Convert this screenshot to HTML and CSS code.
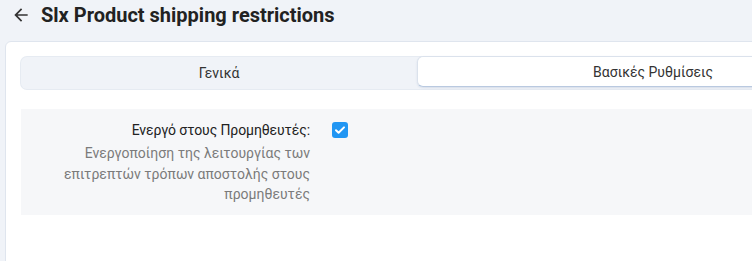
FILE: index.html
```html
<!DOCTYPE html>
<html lang="el">
<head>
<meta charset="utf-8">
<link rel="stylesheet" href="styles.css">
</head>
<body>
<header class="page-header">
  <svg class="back-icon" viewBox="0 0 24 24" width="20" height="20"><path d="M20 11H7.83l5.59-5.59L12 4l-8 8 8 8 1.41-1.41L7.83 13H20v-2z" fill="#333"/></svg>
  <h1 class="page-title">Slx Product shipping restrictions</h1>
</header>
<main class="card">
  <div class="tabs">
    <div class="tab">Γενικά</div>
    <div class="tab tab-active">Βασικές Ρυθμίσεις</div>
  </div>
  <div class="form-row">
    <div class="label-col">
      <div class="field-label">Ενεργό στους Προμηθευτές:</div>
      <div class="field-desc">Ενεργοποίηση της λειτουργίας των επιτρεπτών τρόπων αποστολής στους προμηθευτές</div>
    </div>
    <div class="control-col">
      <span class="checkbox"><svg viewBox="0 0 16 16" width="16" height="16"><path d="M4 8.3l2.6 2.5L12 5.4" fill="none" stroke="#fff" stroke-width="2" stroke-linecap="round" stroke-linejoin="round"/></svg></span>
    </div>
  </div>
</main>
</body>
</html>
```
FILE: styles.css
```css
html, body {
  margin: 0;
  padding: 0;
}
body {
  width: 752px;
  height: 261px;
  overflow: hidden;
  background: #f0f3f8;
  font-family: Roboto, "Noto Sans", sans-serif;
  color: #222;
}
.page-header {
  display: flex;
  align-items: center;
  height: 30px;
  padding: 0 0 0 11px;
  gap: 10px;
  margin-bottom: 11px;
}
.back-icon {
  display: block;
  flex: none;
}
.page-title {
  margin: 0;
  font-size: 20px;
  font-weight: 700;
  color: #222;
  line-height: 24px;
}
.card {
  margin-left: 5px;
  width: 900px;
  height: 300px;
  background: #fff;
  border: 1px solid #dfe5ee;
  border-radius: 6px 0 0 0;
  padding: 15px 0 0 15px;
  box-sizing: border-box;
}
.tabs {
  display: flex;
  width: 868px;
  height: 32px;
  background: #f0f3f8;
  border-radius: 6px;
  box-shadow: 0 0 0 1px #e6ebf2;
}
.tab {
  width: 396px;
  display: flex;
  align-items: center;
  justify-content: center;
  font-size: 14px;
  color: #333;
}
.tab-active {
  width: 472px;
  height: 31px;
  margin-top: -1px;
  background: #fff;
  border: 1px solid #dbe2ec;
  border-bottom-color: #b9c9e0;
  border-radius: 6px;
  box-sizing: border-box;
  box-shadow: 0 1px 2px rgba(80, 110, 160, 0.15);
}
.form-row {
  display: flex;
  margin-top: 20px;
  width: 900px;
  background: #f6f7f9;
  padding: 11px 0 10px 0;
}
.label-col {
  width: 249px;
  padding-left: 40px;
  text-align: right;
  font-size: 14px;
}
.field-label {
  line-height: 20px;
  color: #222;
  letter-spacing: -0.1px;
  margin-bottom: 3px;
}
.field-desc {
  line-height: 20.5px;
  color: #7b7b7b;
}
.control-col {
  padding-left: 22px;
  padding-top: 2px;
}
.checkbox {
  display: block;
  width: 16px;
  height: 16px;
  background: #2196f3;
  border-radius: 3px;
}
.checkbox svg {
  display: block;
}
```
